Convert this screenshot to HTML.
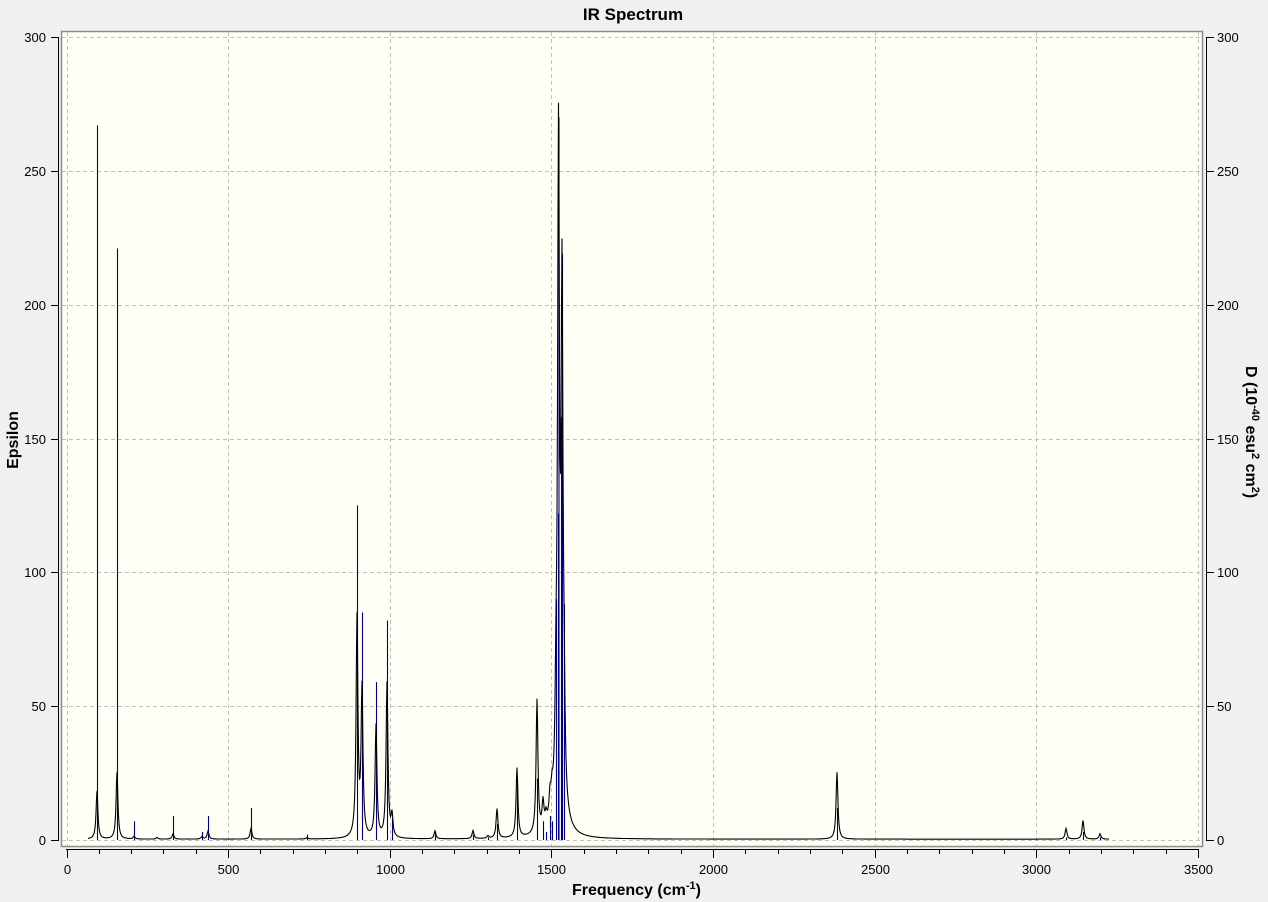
<!DOCTYPE html>
<html><head><meta charset="utf-8"><style>
html,body{margin:0;padding:0;background:#f0f0f0;width:1268px;height:902px;overflow:hidden;font-family:"Liberation Sans",Arial,sans-serif}
svg{position:absolute;left:0;top:0}
</style></head><body>
<svg id="s" width="1268" height="902" viewBox="0 0 1268 902" xmlns="http://www.w3.org/2000/svg">
<rect x="61.5" y="31.5" width="1141" height="815" fill="#fffff5" stroke="#8c8c8c" stroke-width="1.5"/>
<g id="grid" stroke="#c0c0c0" stroke-width="1" stroke-dasharray="4,3" fill="none"></g>
<g id="axes" stroke="#000" stroke-width="1" fill="none"></g>
<g id="lab" font-size="13" fill="#000"></g>
<g id="sticks" stroke="#00008b" stroke-width="1.1"></g>
<path id="curve" fill="none" stroke="#000" stroke-width="1.1"/>
<text x="633" y="20" font-size="17" font-weight="bold" text-anchor="middle">IR Spectrum</text>
<text x="572" y="895" font-size="16" font-weight="bold">Frequency (cm<tspan dy="-6" font-size="11">-1</tspan><tspan dy="6">)</tspan></text>
<text transform="translate(18,440) rotate(-90)" font-size="16" font-weight="bold" text-anchor="middle">Epsilon</text>
<text transform="translate(1246,366) rotate(90)" font-size="16" font-weight="bold">D (10<tspan dy="-6" font-size="11">-40</tspan><tspan dy="6"> esu</tspan><tspan dy="-6" font-size="11">2</tspan><tspan dy="6"> cm</tspan><tspan dy="-6" font-size="11">2</tspan><tspan dy="6">)</tspan></text>
</svg>
<script>
var NS="http://www.w3.org/2000/svg";
function el(p,t,a,txt){var e=document.createElementNS(NS,t);for(var k in a)e.setAttribute(k,a[k]);if(txt!=null)e.textContent=txt;document.getElementById(p).appendChild(e);}
function X(f){return 66.5+f*1131.5/3500;}
function Y(v){return 840-v*803/300;}
var i;
for(i=0;i<=3500;i+=500){var x=Math.round(X(i))+0.5;el("grid","line",{x1:x,y1:32,x2:x,y2:846});}
for(i=0;i<=300;i+=50){var y=Math.round(Y(i))+0.5;el("grid","line",{x1:62,y1:y,x2:1202,y2:y});}
el("axes","line",{x1:58.5,y1:37,x2:58.5,y2:841});
el("axes","line",{x1:1206.5,y1:37,x2:1206.5,y2:841});
el("axes","line",{x1:66,y1:849.5,x2:1199,y2:849.5});
for(i=0;i<=300;i+=50){var y=Math.round(Y(i))+0.5;
 el("axes","line",{x1:51,y1:y,x2:58.5,y2:y});
 el("axes","line",{x1:1206.5,y1:y,x2:1214,y2:y});
 el("lab","text",{x:46,y:y+4.5,"text-anchor":"end"},i);
 el("lab","text",{x:1217,y:y+4.5},i);}
for(i=0;i<=3500;i+=100){var x=Math.round(X(i))+0.5;var big=i%500==0;
 el("axes","line",{x1:x,y1:849.5,x2:x,y2:big?858:854});
 if(big)el("lab","text",{x:x,y:874,"text-anchor":"middle"},i);}
var P=[[97,267,18],[117,221,25],[134,7,1],[157,0,0.6],[173,9,2],[202,3,1],[208,9,3],[251,12,4],[307,2,0.5],
[357,125,82],[362,85,55],[376,59,42],[387,82,58],[392,8,8],[435,3,3],[473,2,3],[488,1,1],[497,6,11],[517,21,26],
[537,23,50],[543,7,10],[546,3,4],[550,9,8],[552,7,7],[556,90,30],[558,122,0],[558.5,270,240],[561,158,0],[562,219,185],[564,88,30],
[837,12,25],[1066,1,4],[1083,3,7],[1100,1,2]];
P.forEach(function(p){if(p[1]>0){var x=p[0]+0.5;el("sticks","line",{x1:x,y1:840,x2:x,y2:Y(p[1])});}});
var g=1.1,d="";
for(var x=88;x<=1109;x+=0.5){var v=0.3;P.forEach(function(p){var t=(x-p[0])/g;v+=p[2]/(1+t*t);});
 var t2=(x-559)/6;v+=12/(1+t2*t2);
 d+=(x==88?"M":"L")+x+","+Y(v).toFixed(1);}
document.getElementById("curve").setAttribute("d",d);
</script>
</body></html>
